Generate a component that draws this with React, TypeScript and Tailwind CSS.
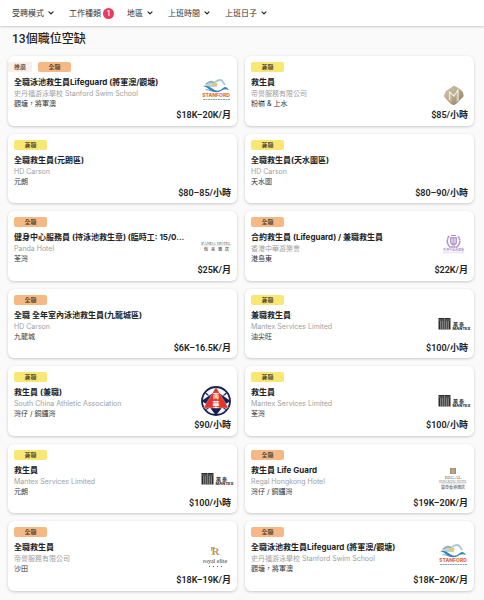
import React from "react";

type LogoName = "stanford" | "gem" | "panda" | "laurel" | "mantex" | "scaa" | "regal" | "royal";

type Job = {
  id: number;
  promoted?: boolean;
  type: "全職" | "兼職";
  title: string;
  company: string;
  place: string;
  pay: string;
  logo?: LogoName;
};

const jobs: Job[] = [
  { id: 1, promoted: true, type: "全職", title: "全職泳池救生員Lifeguard (將軍澳/觀塘)", company: "史丹福游泳學校 Stanford Swim School", place: "觀塘，將軍澳", pay: "$18K–20K/月", logo: "stanford" },
  { id: 2, type: "兼職", title: "救生員", company: "帝譽服務有限公司", place: "粉嶺 & 上水", pay: "$85/小時", logo: "gem" },
  { id: 3, type: "兼職", title: "全職救生員(元朗區)", company: "HD Carson", place: "元朗", pay: "$80–85/小時" },
  { id: 4, type: "兼職", title: "全職救生員(天水圍區)", company: "HD Carson", place: "天水圍", pay: "$80–90/小時" },
  { id: 5, type: "全職", title: "健身中心服務員 (持泳池救生章) (臨時工: 15/0...", company: "Panda Hotel", place: "荃灣", pay: "$25K/月", logo: "panda" },
  { id: 6, type: "全職", title: "合約救生員 (Lifeguard) / 兼職救生員", company: "香港中華游樂會", place: "港島東", pay: "$22K/月", logo: "laurel" },
  { id: 7, type: "全職", title: "全職 全年室內泳池救生員(九龍城區)", company: "HD Carson", place: "九龍城", pay: "$6K–16.5K/月" },
  { id: 8, type: "兼職", title: "兼職救生員", company: "Mantex Services Limited", place: "油尖旺", pay: "$100/小時", logo: "mantex" },
  { id: 9, type: "兼職", title: "救生員 (兼職)", company: "South China Athletic Association", place: "灣仔 / 銅鑼灣", pay: "$90/小時", logo: "scaa" },
  { id: 10, type: "兼職", title: "救生員", company: "Mantex Services Limited", place: "荃灣", pay: "$100/小時", logo: "mantex" },
  { id: 11, type: "兼職", title: "救生員", company: "Mantex Services Limited", place: "元朗", pay: "$100/小時", logo: "mantex" },
  { id: 12, type: "全職", title: "救生員 Life Guard", company: "Regal Hongkong Hotel", place: "灣仔 / 銅鑼灣", pay: "$19K–20K/月", logo: "regal" },
  { id: 13, type: "全職", title: "全職救生員", company: "帝譽服務有限公司", place: "沙田", pay: "$18K–19K/月", logo: "royal" },
  { id: 14, type: "全職", title: "全職泳池救生員Lifeguard (將軍澳/觀塘)", company: "史丹福游泳學校 Stanford Swim School", place: "觀塘，將軍澳", pay: "$18K–20K/月", logo: "stanford" },
];

const filters = [
  { label: "受聘模式" },
  { label: "工作種類", count: 1 },
  { label: "地區" },
  { label: "上班時間" },
  { label: "上班日子" },
];

const cjk = "'Noto Sans CJK TC', sans-serif";
const serif = "'Liberation Serif', 'Noto Sans CJK TC', serif";

function LogoArt({ name }: { name: LogoName }) {
  switch (name) {
    case "stanford":
      return (
        <>
          <path d="M4 8 Q9 2 14 6 L16 11 L5 11Z" fill="#c3d2d5" />
          <path d="M5 8 Q10 3.500 15 8" fill="none" stroke="#6d8fa3" strokeWidth="0.9" />
          <ellipse cx="14" cy="8.500" rx="2.600" ry="2" fill="#dfc878" />
          <path d="M14 6 Q20 2 22 6 L24 9" fill="none" stroke="#a9c7dc" strokeWidth="1.8" />
          <path d="M2 10 Q7 9 12 13 Q17 17 22 12 Q25 9 28 14 Q23 12 20 15 Q14 18 9 14 Q6 11 2 10Z" fill="#3182bd" />
          <path d="M4 14 Q8 12 12 16 Q8 14 4 14Z" fill="#4c9bd0" />
          <text x="15" y="21" textAnchor="middle" fontSize="5" fontWeight="800" fill="#e2703a" fontFamily="Inter, sans-serif">STANFORD</text>
          <path d="M2 23.500 H29" stroke="#7ea8ca" strokeWidth="1" strokeDasharray="2 0.5" />
        </>
      );
    case "gem":
      return (
        <>
          <defs>
            <linearGradient id="gem" x1="0" y1="0" x2="1" y2="1">
              <stop offset="0" stopColor="#d3c9b4" />
              <stop offset="0.5" stopColor="#b8aa8d" />
              <stop offset="1" stopColor="#85765a" />
            </linearGradient>
          </defs>
          <path d="M16 9.500 L22 13 Q25 15 25.500 19 Q26 20 25 21 L18 28 Q15.500 30 13 28 L7 22 Q5 20 6.500 18 L8 15Z" fill="url(#gem)" />
          <path d="M11.500 24 V16 L16 20 L20 14 V25" fill="none" stroke="#f3eee2" strokeWidth="1.2" />
          <path d="M13 18 V26 M18.300 18 V26" stroke="#d8ceb9" strokeWidth="0.7" />
        </>
      );
    case "panda":
      return (
        <>
          <text x="15" y="14" textAnchor="middle" fontSize="5" fill="#555" fontFamily={serif}>
            P<tspan fontSize="4">ANDA</tspan> H<tspan fontSize="4">OTEL</tspan>
          </text>
          <path d="M0 14.800 H30" stroke="#aaa" strokeWidth="0.3" />
          <text y="20" fontSize="4" fontWeight="500" fill="#444" fontFamily={cjk}>
            <tspan x="3">悅</tspan><tspan x="10">來</tspan><tspan x="17">酒</tspan><tspan x="24">店</tspan>
          </text>
        </>
      );
    case "laurel":
      return (
        <>
          <path d="M11 5 Q7 11 12 16 H19 Q24 11 20 5" fill="none" stroke="#a88bc4" strokeWidth="1.6" strokeDasharray="1.8 0.4" />
          <path d="M12 6 H19 V12 Q18 14 15.500 15 Q13 14 12 12Z" fill="#b59fce" />
          <path d="M14 7 V12 M17 7 V12 M13 9 H18 M13 11 H18" stroke="#f5eefa" strokeWidth="0.6" />
          <path d="M13 4.500 H18" stroke="#a88bc4" />
          <text x="15.500" y="20" textAnchor="middle" fontSize="3" fill="#9873b8" fontFamily={cjk}>香港中華游樂會</text>
          <path d="M5 21.800 H26" stroke="#d4c4e2" strokeWidth="0.6" />
        </>
      );
    case "mantex":
      return (
        <>
          <path d="M0.500 9 H12.500 V20.500 H0.500Z" fill="#2b2b2b" />
          <path d="M2.800 12 V20.500 M4.800 12 V20.500 M8.200 12 V20.500 M10.200 12 V20.500" stroke="#f4f4f4" strokeWidth="0.6" />
          <path d="M0.500 11 H5.800 M7.200 11 H12.500 M6.500 9 V20.500" stroke="#c8c8c8" strokeWidth="0.5" />
          <text y="16.500" fontSize="5" fontWeight="700" fill="#333" fontFamily={cjk}>
            <tspan x="15">萬</tspan><tspan x="21">泰</tspan>
          </text>
          <text x="14.500" y="20.500" fontSize="4" fontWeight="800" fill="#333" fontFamily="Inter, sans-serif">MANTEX</text>
        </>
      );
    case "scaa":
      return (
        <>
          <circle cx="15" cy="15" r="14" fill="#f4f5fa" stroke="#18204f" strokeWidth="1.800" />
          <path d="M15 0.500 L18 7 L29.500 15 L23 19 L15 29.500 L7 19 L0.500 15 L12 7Z" fill="#18204f" />
          <path d="M4.500 7 L7.500 9.500 M25.500 7 L22.500 9.500 M5 23.500 L8 21.500 M25 23.500 L22 21.500" stroke="#18204f" strokeWidth="1.100" />
          <path d="M15 1.500 L27.500 22 H2.500Z" fill="#e43428" stroke="#fff" strokeWidth="0.300" />
          <text x="15" y="11.500" textAnchor="middle" fontSize="6" fontWeight="700" fill="#fff" fontFamily={cjk}>南</text>
          <text x="15" y="21" textAnchor="middle" fontSize="7" fontWeight="700" fill="#fff" fontFamily={cjk}>華</text>
        </>
      );
    case "regal":
      return (
        <>
          <rect x="12" y="4" width="6" height="6" fill="#a58d70" />
          <path d="M13 6 H17 M13 8 H17 M15 4 V10" stroke="#d9c8b2" strokeWidth="0.5" />
          <text x="15" y="15" textAnchor="middle" fontSize="5" fill="#666" fontFamily={serif}>REGAL</text>
          <text x="15" y="18.500" textAnchor="middle" fontSize="3" fill="#777" fontFamily={serif}>HONGKONG HOTEL</text>
          <path d="M3 19.800 H27" stroke="#bbb" strokeWidth="0.5" />
          <text x="15" y="24.500" textAnchor="middle" fontSize="4" fontWeight="500" fill="#666" fontFamily={cjk}>富豪香港酒店</text>
        </>
      );
    case "royal":
      return (
        <>
          <text x="14.500" y="14" textAnchor="middle" fontSize="11" fontWeight="700" fill="#b49a5c" fontFamily={serif}>R</text>
          <path d="M10 6.500 H14 M10.500 6.500 V10" fill="none" stroke="#b49a5c" strokeWidth="0.8" />
          <text x="14" y="21.500" textAnchor="middle" fontSize="6" fill="#333" fontFamily={serif}>royal elite</text>
          <path d="M8 25.500 H21" stroke="#555" strokeWidth="1.200" strokeDasharray="1 3" />
        </>
      );
  }
}

function Chevron() {
  return (
    <svg viewBox="0 0 6 4" className="h-1 w-1.5" fill="none" stroke="#222" strokeWidth="1.2" strokeLinecap="round" strokeLinejoin="round" aria-hidden="true">
      <path d="M1 0.800 L3 2.800 L5 0.800" />
    </svg>
  );
}

function JobCard({ job }: { job: Job }) {
  return (
    <article className="min-w-0 rounded-[6px] bg-white px-[6px] pt-[6px] shadow-[0_1px_3px_rgba(0,0,0,0.2)]">
      <div className="flex h-[10px] gap-[6px] text-[6px] leading-[10px] font-medium text-[#4a3b2c]">
        {job.promoted && <span className="-ml-[6px] w-6 rounded-r-[1px] bg-[#f9efed] text-center">推廣</span>}
        <span className={`w-[33px] rounded-[2px] text-center ${job.type === "全職" ? "bg-[#f6b986]" : "bg-[#f9e773]"}`}>{job.type}</span>
      </div>
      <div className="mt-1 flex gap-[6px]">
        <div className="min-w-0 flex-1">
          <h2 className="truncate text-[8px] leading-[13px] font-bold text-[#222]">{job.title}</h2>
          <p className="truncate text-[7px] leading-[10px] text-[#a0a0a0]">{job.company}</p>
          <p className="truncate text-[7px] leading-[10px] text-[#333]">{job.place}</p>
        </div>
        {job.logo && (
          <svg viewBox="0 0 30 30" className="size-[30px] shrink-0 overflow-visible" role="img" aria-label={job.company}>
            <LogoArt name={job.logo} />
          </svg>
        )}
      </div>
      <p className="text-right font-['Roboto','Noto_Sans_CJK_TC',sans-serif] text-[9px] leading-[13px] font-semibold text-[#222]">{job.pay}</p>
    </article>
  );
}

export default function App() {
  return (
    <div className="flex min-h-screen flex-col bg-[#fafafa] font-['Inter','Noto_Sans_CJK_TC',sans-serif]">
      <header className="flex h-[26px] items-center gap-[15px] bg-white px-3 shadow-[0_1px_2px_rgba(0,0,0,0.2)]">
        {filters.map((f) => (
          <button key={f.label} type="button" className="flex items-center gap-1 text-[8px] leading-3 text-[#333]">
            {f.label}
            {f.count ? (
              <span className="-mx-[2px] size-[11px] rounded-full bg-[#f0395a] text-center text-[8px] leading-[11px] font-medium text-white">{f.count}</span>
            ) : (
              <Chevron />
            )}
          </button>
        ))}
      </header>
      <main className="flex flex-1 flex-col pt-[4px] pr-[10px] pb-[9px] pl-2">
        <h1 className="px-1 font-['Roboto','Noto_Sans_CJK_TC',sans-serif] text-[12px] leading-[18px] font-medium text-[#222]">13個職位空缺</h1>
        <div className="mt-2 grid flex-1 auto-rows-fr grid-cols-2 gap-2">
          {jobs.map((job) => (
            <JobCard key={job.id} job={job} />
          ))}
        </div>
      </main>
    </div>
  );
}
